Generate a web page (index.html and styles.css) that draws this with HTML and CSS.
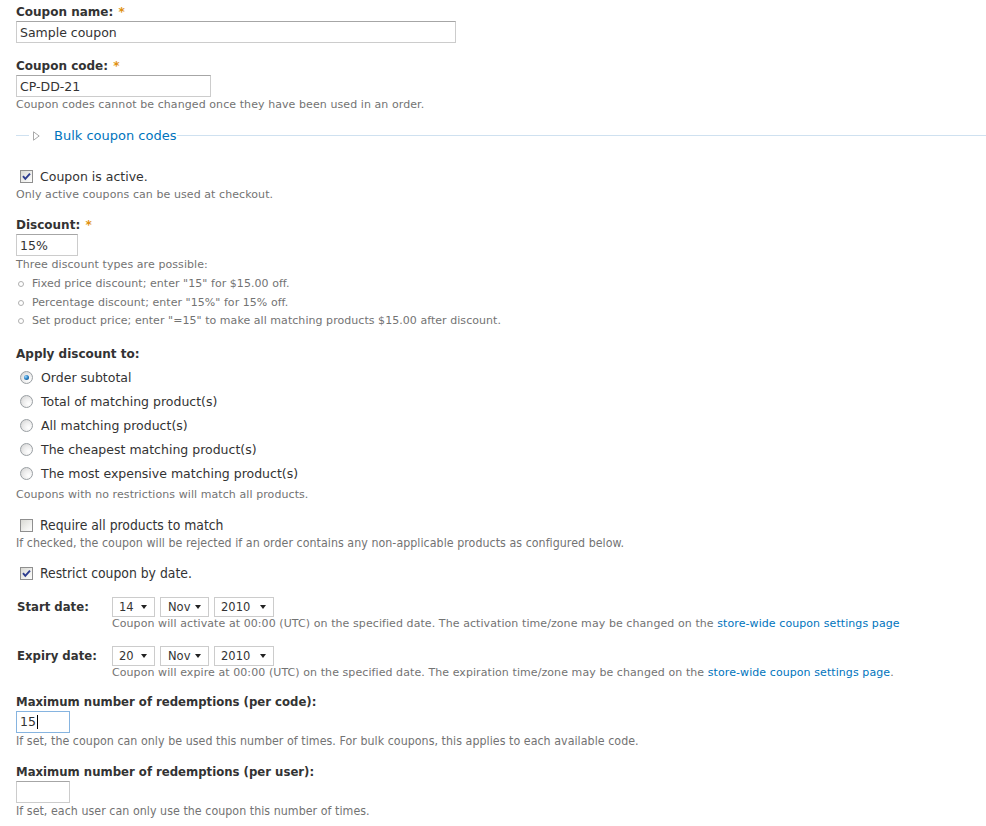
FILE: index.html
```html
<!DOCTYPE html>
<html lang="en">
<head>
<meta charset="utf-8">
<title>Coupon</title>
<link rel="stylesheet" href="styles.css">
</head>
<body>
<form class="form">
  <div class="item first">
    <label class="label">Coupon name: <span class="req">*</span></label>
    <input class="text w-name" type="text" value="Sample coupon">
  </div>

  <div class="item">
    <label class="label">Coupon code: <span class="req">*</span></label>
    <input class="text w-code" type="text" value="CP-DD-21">
    <div class="desc">Coupon codes cannot be changed once they have been used in an order.</div>
  </div>

  <fieldset class="collapsible">
    <legend class="legend">
      <svg class="tri" width="7" height="10" viewBox="0 0 7 10"><path d="M0.5 0.8 L6.2 5 L0.5 9.2 Z" fill="#fff" stroke="#a9a9a9" stroke-width="1"/></svg>
      <a class="legend-link" href="#">Bulk coupon codes</a>
    </legend>
  </fieldset>

  <div class="check-row active-row">
    <span class="cb"><svg width="11" height="11" viewBox="0 0 11 11"><path d="M2 5.2 L4.3 7.8 L9 2.6" fill="none" stroke="#2d3c8f" stroke-width="1.9"/></svg></span>
    <span class="opt">Coupon is active.</span>
  </div>
  <div class="desc d2">Only active coupons can be used at checkout.</div>

  <div class="item discount">
    <label class="label">Discount: <span class="req">*</span></label>
    <input class="text w-disc" type="text" value="15%">
    <div class="desc d2">Three discount types are possible:</div>
    <ul class="bullets">
      <li>Fixed price discount; enter "15" for $15.00 off.</li>
      <li>Percentage discount; enter "15%" for 15% off.</li>
      <li>Set product price; enter "=15" to make all matching products $15.00 after discount.</li>
    </ul>
  </div>

  <div class="item apply">
    <div class="label">Apply discount to:</div>
    <div class="radios">
      <div class="radio-row"><span class="radio checked"></span><span class="opt">Order subtotal</span></div>
      <div class="radio-row"><span class="radio"></span><span class="opt">Total of matching product(s)</span></div>
      <div class="radio-row"><span class="radio"></span><span class="opt">All matching product(s)</span></div>
      <div class="radio-row"><span class="radio"></span><span class="opt">The cheapest matching product(s)</span></div>
      <div class="radio-row"><span class="radio"></span><span class="opt">The most expensive matching product(s)</span></div>
    </div>
    <div class="desc d2">Coupons with no restrictions will match all products.</div>
  </div>

  <div class="check-row require-row">
    <span class="cb"></span>
    <span class="opt-narrow">Require all products to match</span>
  </div>
  <div class="desc-narrow d2">If checked, the coupon will be rejected if an order contains any non-applicable products as configured below.</div>

  <div class="check-row restrict-row">
    <span class="cb"><svg width="11" height="11" viewBox="0 0 11 11"><path d="M2 5.2 L4.3 7.8 L9 2.6" fill="none" stroke="#2d3c8f" stroke-width="1.9"/></svg></span>
    <span class="opt-narrow">Restrict coupon by date.</span>
  </div>

  <div class="date-item start">
    <div class="label-narrow">Start date:</div>
    <div class="selects">
      <span class="select s-day">14<i class="arrow"></i></span>
      <span class="select s-mon">Nov<i class="arrow"></i></span>
      <span class="select s-year">2010<i class="arrow"></i></span>
    </div>
    <div></div>
    <div class="desc date-desc">Coupon will activate at 00:00 (UTC) on the specified date. The activation time/zone may be changed on the <a href="#">store-wide coupon settings page</a></div>
  </div>

  <div class="date-item expiry">
    <div class="label-narrow">Expiry date:</div>
    <div class="selects">
      <span class="select s-day">20<i class="arrow"></i></span>
      <span class="select s-mon">Nov<i class="arrow"></i></span>
      <span class="select s-year">2010<i class="arrow"></i></span>
    </div>
    <div></div>
    <div class="desc date-desc">Coupon will expire at 00:00 (UTC) on the specified date. The expiration time/zone may be changed on the <a href="#">store-wide coupon settings page</a>.</div>
  </div>

  <div class="item max-code">
    <div class="label-narrow">Maximum number of redemptions (per code):</div>
    <div class="text w-max focused">15<span class="caret"></span></div>
    <div class="desc-narrow">If set, the coupon can only be used this number of times. For bulk coupons, this applies to each available code.</div>
  </div>

  <div class="item max-user">
    <div class="label-narrow">Maximum number of redemptions (per user):</div>
    <input class="text w-max" type="text" value="">
    <div class="desc-narrow">If set, each user can only use the coupon this number of times.</div>
  </div>
</form>
</body>
</html>
```

FILE: styles.css
```css
html, body {
  margin: 0;
  padding: 0;
  background: #fff;
}

.form {
  padding: 3px 0 0 16px;
  font-family: "DejaVu Sans", Verdana, sans-serif;
  font-size: 13px;
  color: #333;
}

.item { margin-top: 14px; }
.item.first { margin-top: 0; }

.label {
  display: block;
  font-weight: bold;
  font-size: 12px;
  line-height: 18px;
  color: #333;
}

.req {
  color: #e09010;
  font-weight: bold;
  margin-left: 1px;
}

.text {
  display: block;
  box-sizing: border-box;
  height: 22px;
  margin: 0;
  padding: 2px 3px;
  border: 1px solid #ccc;
  border-top-color: #a6a6a6;
  font-family: "DejaVu Sans", Verdana, sans-serif;
  font-size: 12.5px;
  line-height: 16px;
  color: #333;
  background: #fff;
  outline: none;
}
.w-name { width: 440px; }
.w-code { width: 195px; }
.w-disc { width: 62px; }
.w-max { width: 54px; }

.text.focused {
  border-color: #86b4e0;
  display: flex;
  align-items: center;
}
.caret {
  display: inline-block;
  width: 1px;
  height: 14px;
  background: #000;
  margin-left: 1px;
}

.desc {
  font-size: 11px;
  line-height: 14px;
  letter-spacing: 0.08px;
  color: #737373;
  margin-top: 1px;
}
.d2 { margin-top: 2px; }
.desc a, .legend-link {
  color: #0074bd;
  text-decoration: none;
}

/* Tahoma-like narrower text */
.opt-narrow, .desc-narrow, .label-narrow {
  font-family: "DejaVu Sans Condensed", "DejaVu Sans", sans-serif;
  font-stretch: condensed;
}
.opt-narrow {
  margin-left: 7px;
  font-size: 13.8px;
  color: #333;
}
.desc-narrow {
  font-size: 12.3px;
  line-height: 14px;
  letter-spacing: 0.05px;
  color: #737373;
  margin-top: 1px;
}
.desc-narrow.d2 { margin-top: 2px; }
.label-narrow {
  font-weight: bold;
  font-size: 13px;
  line-height: 18px;
  color: #333;
}

/* Fieldset */
.collapsible {
  margin: 15px 0 0 0;
  padding: 0 0 0 13px;
  border: none;
  border-top: 1px solid #cfe1f0;
  min-width: 0;
}
.legend {
  padding: 0 1px 0 4px;
  line-height: 17px;
  font-size: 13px;
  display: flex;
  align-items: center;
}
.tri {
  display: block;
  margin-right: 14px;
}

/* Checkbox rows */
.check-row {
  display: flex;
  align-items: center;
  height: 18px;
  padding-left: 4px;
}
.active-row { margin-top: 23px; }
.active-row + .desc { margin-top: 3px; }
.require-row { margin-top: 14px; }
.restrict-row { margin-top: 14px; }

.cb {
  box-sizing: border-box;
  width: 13px;
  height: 13px;
  border: 1px solid #8f8f8f;
  background: linear-gradient(135deg, #d9d9d4 0%, #f4f4f2 70%, #fdfdfd 100%);
  display: flex;
  align-items: center;
  justify-content: center;
  flex: none;
}
.opt {
  margin-left: 7px;
  font-size: 12.5px;
  color: #333;
}

/* Bullets */
.discount { margin-top: 14px; }
.bullets {
  list-style: none;
  margin: 3px 0 0 0;
  padding: 0;
  font-size: 11px;
  letter-spacing: 0.05px;
  color: #737373;
}
.bullets li {
  height: 18.5px;
  line-height: 18.5px;
  display: flex;
  align-items: center;
}
.bullets li::before {
  content: "";
  box-sizing: border-box;
  width: 6px;
  height: 6px;
  border: 1px solid #b0b0b0;
  border-radius: 50%;
  margin: 0 8px 0 2px;
  flex: none;
}

/* Radios */
.apply { margin-top: 14.5px; }
.radios { margin-top: 2px; }
.radio-row {
  display: flex;
  align-items: center;
  height: 24px;
  padding-left: 4px;
}
.radio {
  box-sizing: border-box;
  width: 13px;
  height: 13px;
  border-radius: 50%;
  border: 1px solid #9a9fa3;
  background: radial-gradient(circle at 70% 70%, #ffffff 0%, #eeeeee 45%, #cfcfcf 100%);
  display: flex;
  align-items: center;
  justify-content: center;
  flex: none;
}
.radio.checked::after {
  content: "";
  width: 5px;
  height: 5px;
  border-radius: 50%;
  background: radial-gradient(circle at 35% 35%, #9fd8ff 0%, #2f86c8 45%, #0b3f70 100%);
}
.radio + .opt { margin-left: 8px; }
.apply .d2 { margin-top: 3px; }

/* Date rows */
.date-item {
  display: grid;
  grid-template-columns: 96px auto;
  align-items: center;
}
.date-item.start { margin-top: 15px; }
.date-item.expiry { margin-top: 16px; }
.date-item .label-narrow {
  line-height: 20px;
  padding-left: 1px;
}
.selects {
  display: flex;
  gap: 5px;
}
.select {
  box-sizing: border-box;
  height: 20px;
  border: 1px solid #ccc;
  display: flex;
  align-items: center;
  justify-content: space-between;
  padding: 0 7px 0 6px;
  font-size: 11.5px;
  color: #333;
  background: #fff;
}
.s-day { width: 43px; }
.s-mon { width: 49px; padding-left: 7px; }
.s-year { width: 60px; padding-left: 6px; }
.arrow {
  width: 0;
  height: 0;
  border-left: 3.5px solid transparent;
  border-right: 3.5px solid transparent;
  border-top: 4px solid #222;
}
.date-desc {
  margin-top: 0;
  line-height: 13px;
}

/* Max redemptions */
.max-code { margin-top: 14px; }
.max-code .text { margin-top: 0; }
.max-user { margin-top: 15px; }
```
